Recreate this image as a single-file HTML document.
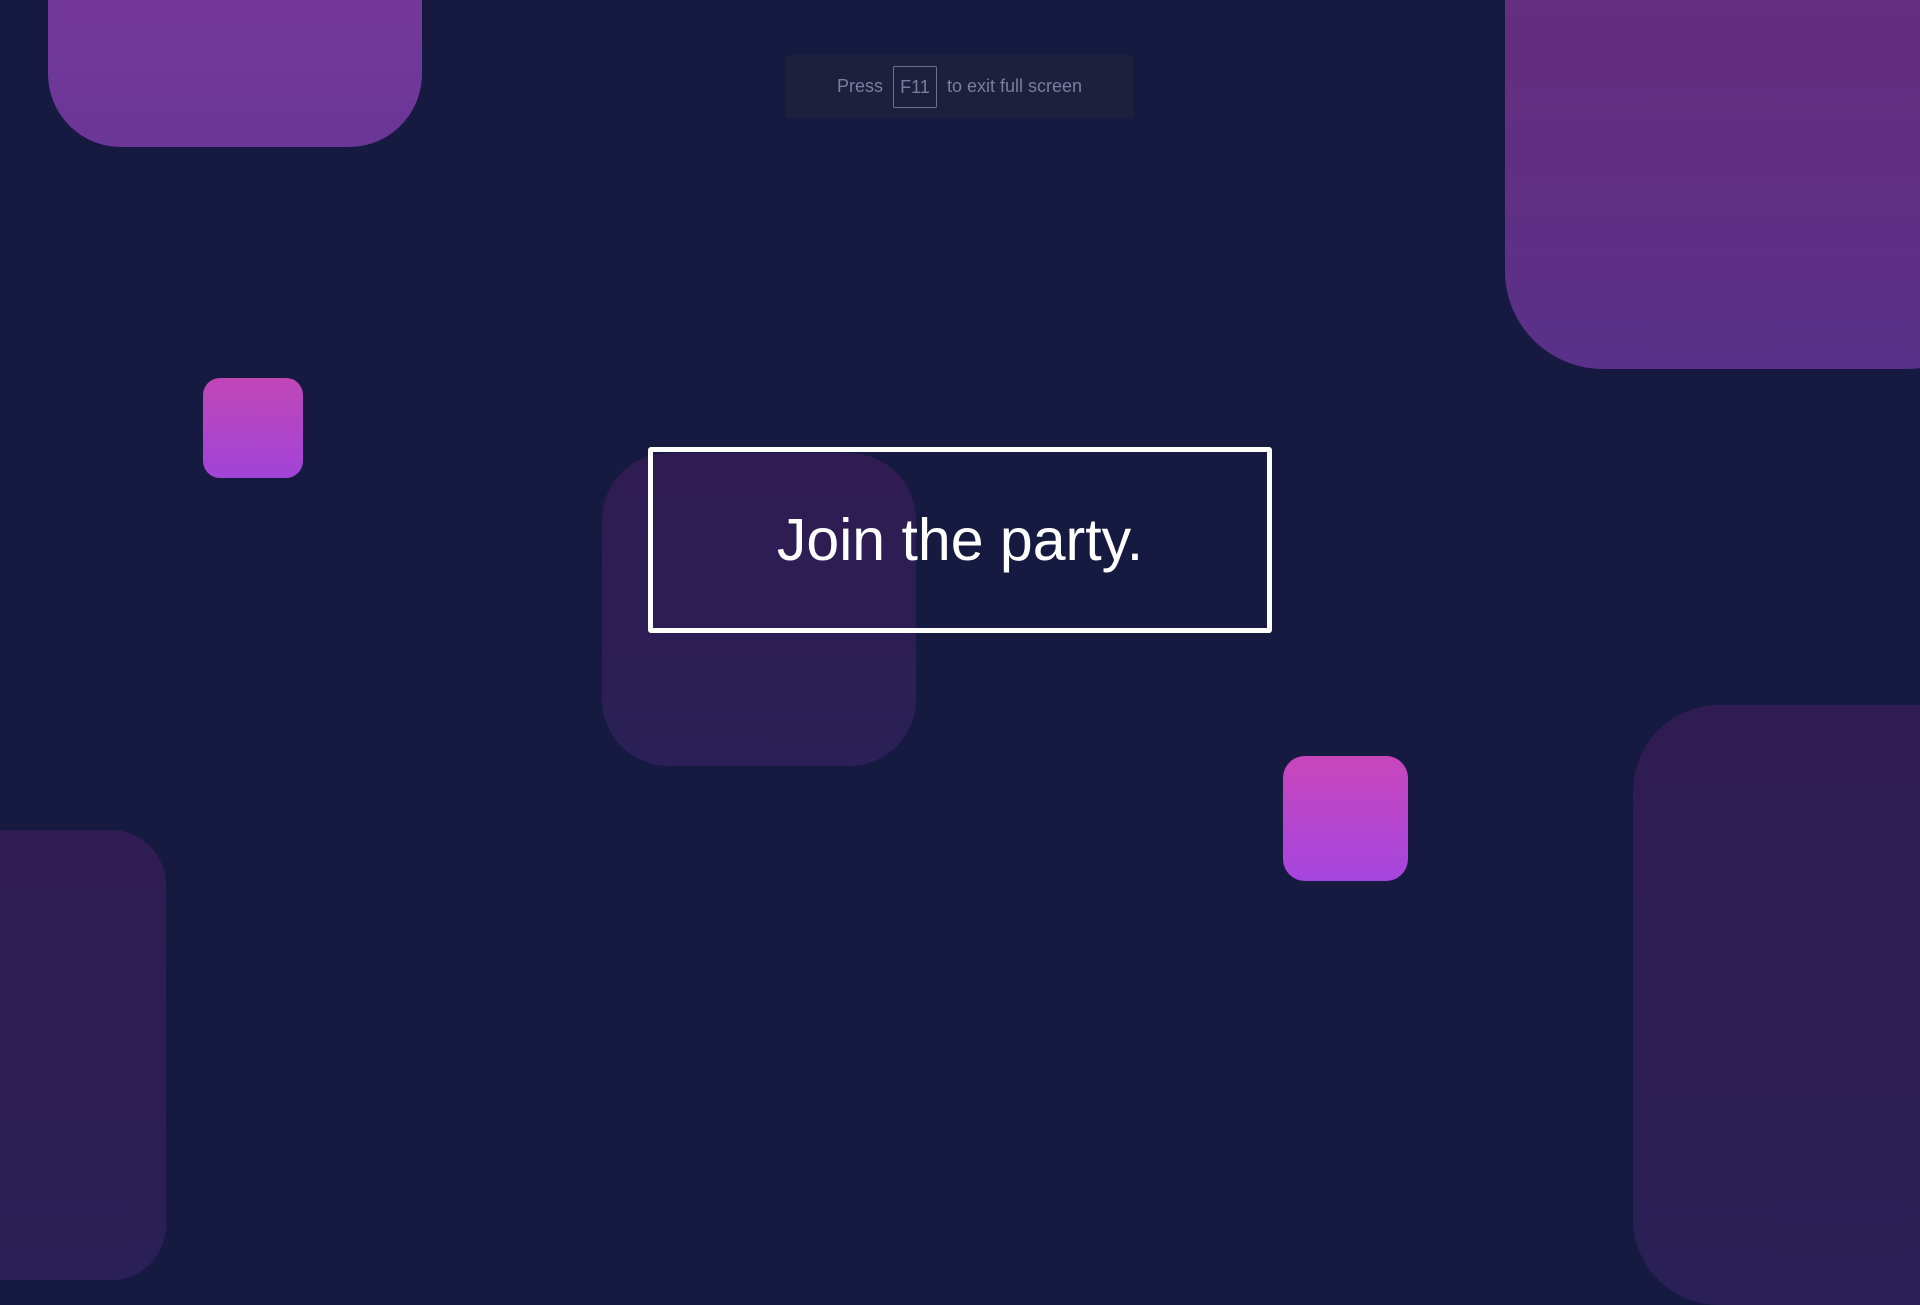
<!DOCTYPE html>
<html><head><meta charset="utf-8"><style>
html,body{margin:0;padding:0;width:1920px;height:1080px;overflow:hidden;background:#161940;font-family:"Liberation Sans",sans-serif;}
.s{position:absolute;}
</style></head><body>
<div class="s" style="left:48px;top:-80px;width:374px;height:227px;border-radius:73px;background:linear-gradient(#7a3a9c,#6a3698);"></div>
<div class="s" style="left:1505px;top:-100px;width:500px;height:469px;border-radius:98px;background:linear-gradient(#682d7b,#5a3189);"></div>
<div class="s" style="left:203px;top:378px;width:100px;height:100px;border-radius:17px;background:linear-gradient(#c046b8,#a144d8);"></div>
<div class="s" style="left:602px;top:453px;width:314px;height:313px;border-radius:67px;background:linear-gradient(#2e1c52,#2a2057);"></div>
<div class="s" style="left:1283px;top:756px;width:125px;height:125px;border-radius:22px;background:linear-gradient(#c946bc,#a545df);"></div>
<div class="s" style="left:1633px;top:705px;width:400px;height:600px;border-radius:86px;background:linear-gradient(#2e1c52,#2a2057);"></div>
<div class="s" style="left:-100px;top:830px;width:266px;height:450px;border-radius:55px;background:linear-gradient(#2e1c52,#2a2057);"></div>
<div class="s" style="left:648px;top:447px;width:614px;height:176px;border:5px solid #fff;border-radius:3px;display:flex;align-items:center;justify-content:center;color:#fff;font-size:59px;">Join the party.</div>
<div class="s" style="left:786px;top:55px;width:347px;height:63px;background:#1d1f3d;display:flex;align-items:center;justify-content:center;color:#7c7d9c;font-size:18px;">
<span>Press</span><span style="display:inline-block;margin:0 10px;border:1px solid #6e6f8e;border-radius:2px;width:42px;height:40px;line-height:40px;text-align:center;">F11</span><span>to exit full screen</span></div>
</body></html>
